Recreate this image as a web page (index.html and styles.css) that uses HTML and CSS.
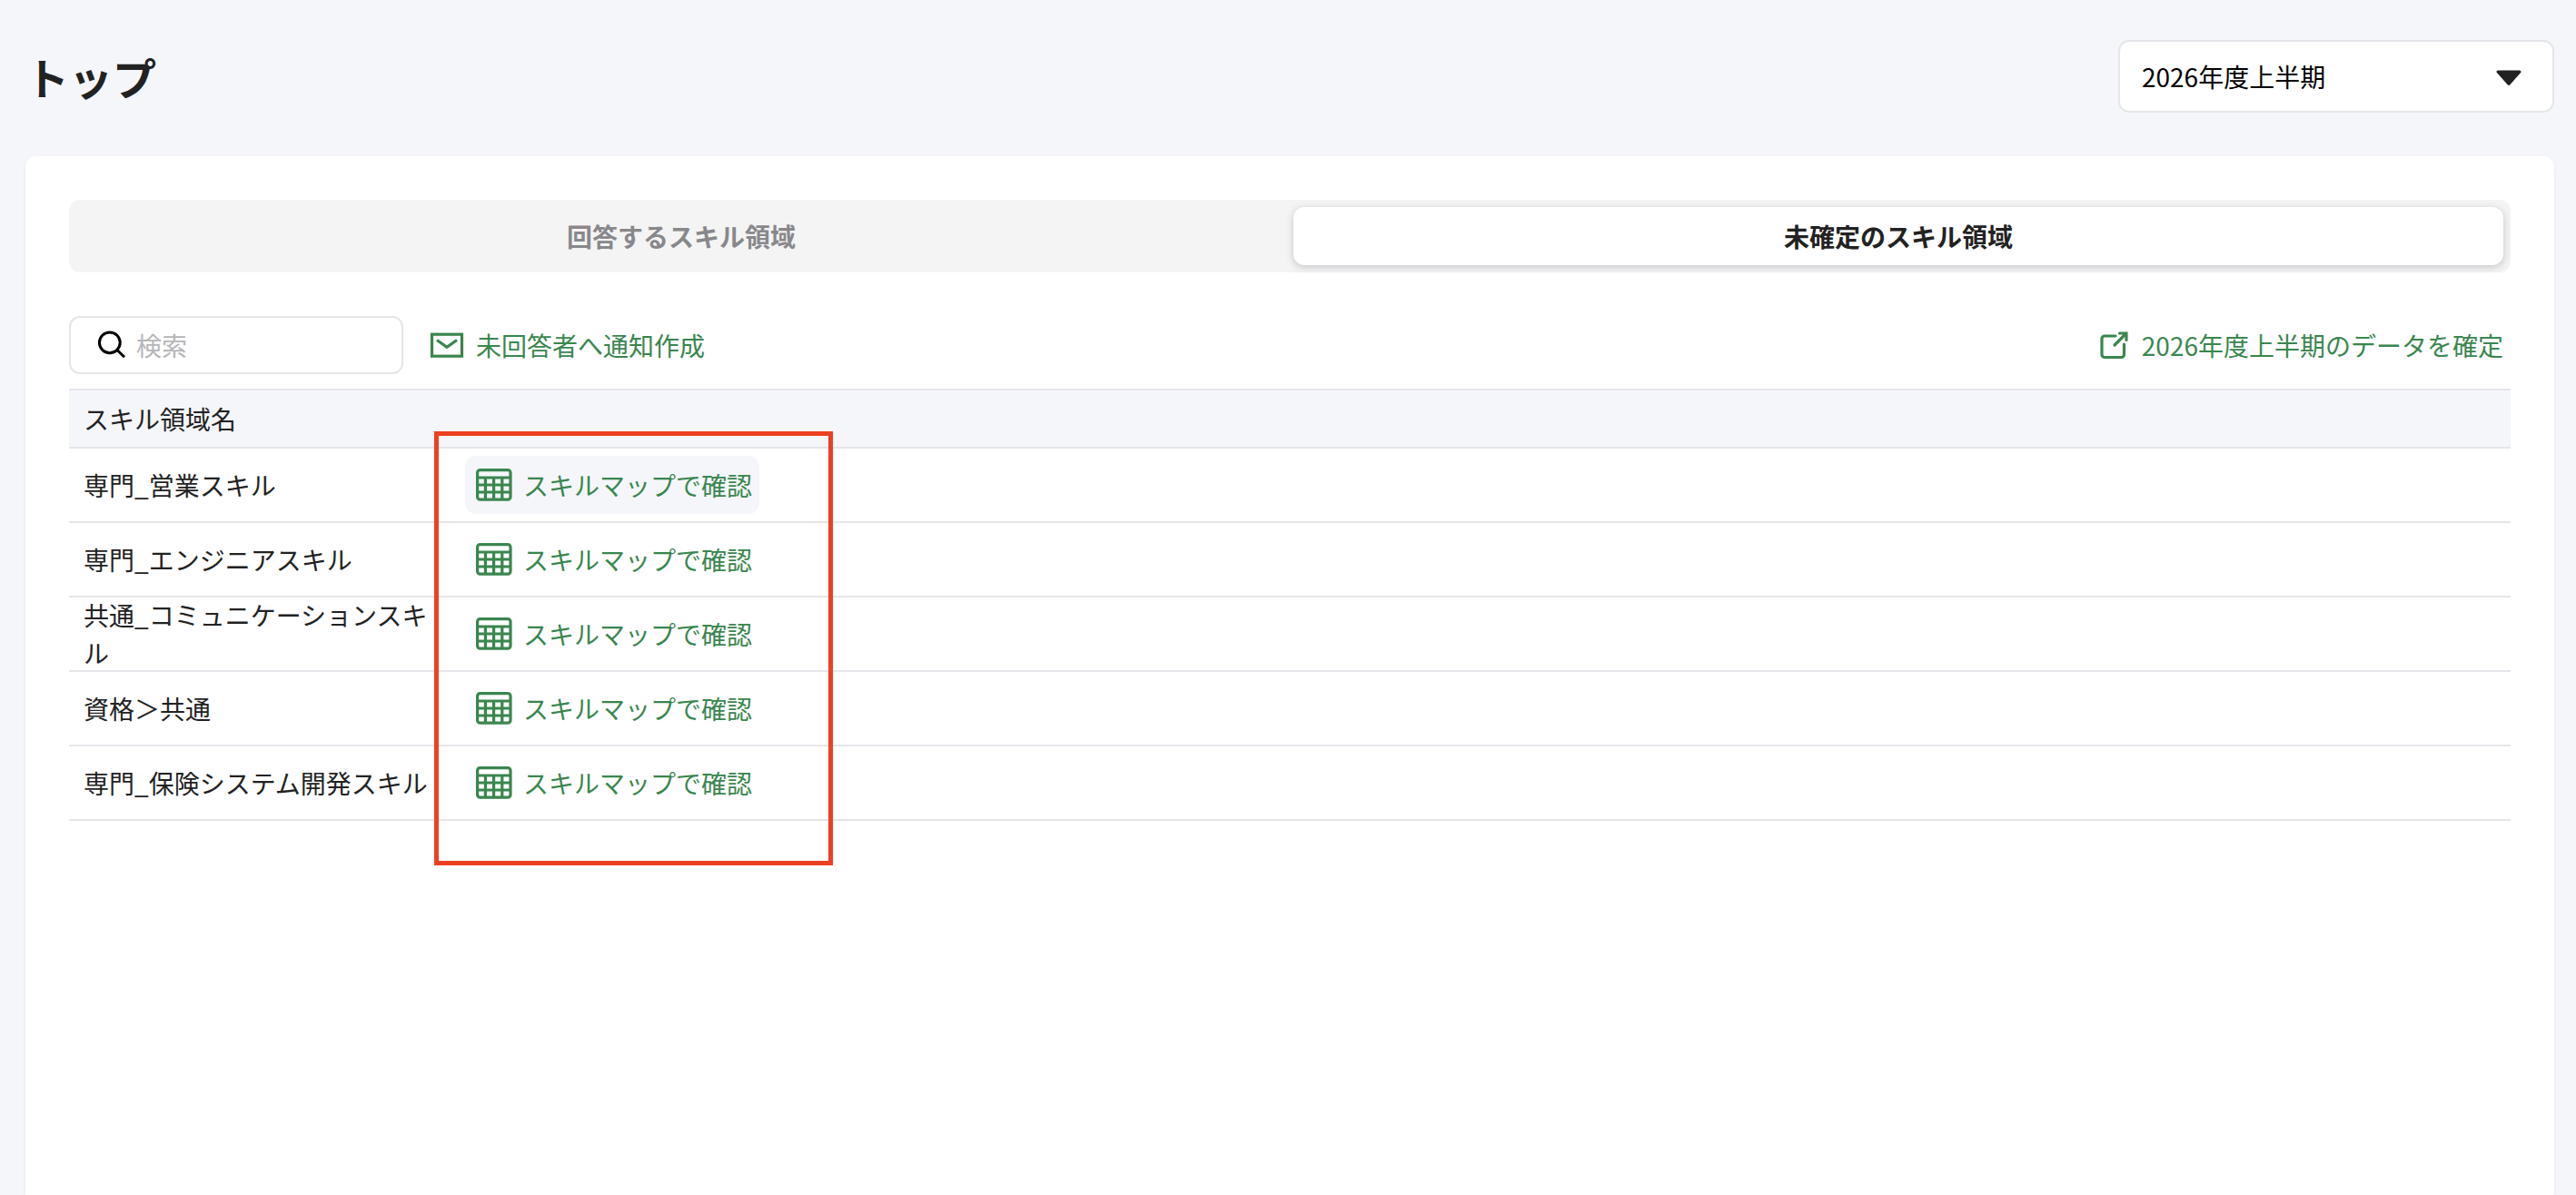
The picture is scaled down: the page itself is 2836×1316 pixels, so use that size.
FILE: index.html
```html
<!DOCTYPE html>
<html lang="ja">
<head>
    <meta charset="UTF-8">
    <meta name="viewport" content="width=device-width, initial-scale=1.0">
    <title>トップ</title>
    <link rel="stylesheet" href="styles.css">
</head>
<body>
    <!-- Shared icons -->
    <svg class="icon-defs" width="0" height="0">
        <symbol id="icon-grid" viewBox="0 0 40 36">
            <rect x="1.6" y="1.6" width="36.4" height="32.6" rx="3"/>
            <path d="M1.600 10H38M1.600 18H38M1.600 26H38M10.400 10V34M19.600 10V34M28.800 10V34"/>
        </symbol>
    </svg>

    <header class="page-header">
        <h1 class="page-title">トップ</h1>
        <div class="term-select">
            <span>2026年度上半期</span>
            <svg class="term-arrow" width="28" height="18" viewBox="0 0 28 18">
                <path d="M2 2H26L14 15.5Z"/>
            </svg>
        </div>
    </header>

    <main class="card">
        <div class="tabs">
            <div class="tab">回答するスキル領域</div>
            <div class="tab active">未確定のスキル領域</div>
        </div>

        <div class="toolbar">
            <label class="search-box">
                <svg class="search-icon" width="32" height="32" viewBox="0 0 32 32">
                    <circle cx="13.8" cy="13.3" r="11.4"/>
                    <path d="M21.5 21L30 29.3"/>
                </svg>
                <input class="search-input" type="text" placeholder="検索">
            </label>
            <a class="link-btn">
                <svg class="icon" width="40" height="32" viewBox="0 0 40 32">
                    <rect x="3.5" y="4.2" width="33" height="24"/>
                    <path d="M9 10.5L20 18.3L31 10.5"/>
                </svg>
                <span>未回答者へ通知作成</span>
            </a>
            <a class="link-btn confirm-btn">
                <svg class="icon icon-open" width="40" height="32" viewBox="0 0 40 32">
                    <path d="M23 6H11A3 3 0 0 0 8 9V26.500A3 3 0 0 0 11 29.500H29.500A3 3 0 0 0 32.500 26.500V15"/>
                    <path d="M22 16L35 3M27.500 3H35V10.500"/>
                </svg>
                <span>2026年度上半期のデータを確定</span>
            </a>
        </div>

        <div class="skill-table">
            <div class="skill-head">スキル領域名</div>
            <div class="skill-row">
                <div class="skill-name">専門_営業スキル</div>
                <a class="link-btn hover"><svg class="icon" width="40" height="36"><use href="#icon-grid"/></svg><span>スキルマップで確認</span></a>
            </div>
            <div class="skill-row">
                <div class="skill-name">専門_エンジニアスキル</div>
                <a class="link-btn"><svg class="icon" width="40" height="36"><use href="#icon-grid"/></svg><span>スキルマップで確認</span></a>
            </div>
            <div class="skill-row">
                <div class="skill-name">共通_コミュニケーションスキル</div>
                <a class="link-btn"><svg class="icon" width="40" height="36"><use href="#icon-grid"/></svg><span>スキルマップで確認</span></a>
            </div>
            <div class="skill-row">
                <div class="skill-name">資格＞共通</div>
                <a class="link-btn"><svg class="icon" width="40" height="36"><use href="#icon-grid"/></svg><span>スキルマップで確認</span></a>
            </div>
            <div class="skill-row">
                <div class="skill-name">専門_保険システム開発スキル</div>
                <a class="link-btn"><svg class="icon" width="40" height="36"><use href="#icon-grid"/></svg><span>スキルマップで確認</span></a>
            </div>
            <div class="highlight"></div>
        </div>
    </main>
</body>
</html>
```

FILE: styles.css
```css
* {
    margin: 0;
    padding: 0;
    box-sizing: border-box;
}

body {
    display: flex;
    flex-direction: column;
    height: 100vh;
    padding: 44px 24px 0 28px;
    overflow: hidden;
    background: #f4f6fa;
    color: #222;
    font-family: "Noto Sans CJK JP", sans-serif;
    font-size: 28px;
    line-height: 42px;
}

.icon-defs {
    position: absolute;
}

/* Header */
.page-header {
    display: flex;
    justify-content: space-between;
    align-items: center;
    height: 80px;
    margin-bottom: 48px;
    flex-shrink: 0;
}

.page-title {
    font-size: 48px;
    font-weight: 700;
    line-height: 72px;
}

.term-select {
    display: flex;
    justify-content: space-between;
    align-items: center;
    width: 480px;
    height: 80px;
    padding: 0 34px 0 24px;
    border: 2px solid #e5e6ea;
    border-radius: 12px;
    background: #fff;
    color: #000;
}

.term-arrow {
    margin-top: 4px;
    fill: #222;
    stroke: #222;
    stroke-width: 3;
    stroke-linejoin: round;
}

/* Card */
.card {
    flex: 1;
    padding: 48px;
    border-radius: 12px 12px 0 0;
    background: #fff;
    box-shadow: 0 2px 4px rgba(34, 34, 60, 0.06);
}

.tabs {
    display: flex;
    gap: 8px;
    height: 80px;
    padding: 8px;
    border-radius: 12px;
    background: #f4f4f4;
}

.tab {
    flex: 1;
    border-radius: 12px;
    color: #88888b;
    font-weight: 700;
    line-height: 64px;
    text-align: center;
}

.tab.active {
    background: #fff;
    color: #222;
    box-shadow: 0 2px 8px rgba(34, 34, 51, 0.22);
}

/* Toolbar */
.toolbar {
    display: flex;
    align-items: center;
    gap: 16px;
    margin: 48px 0 16px;
}

.search-box {
    display: flex;
    align-items: center;
    gap: 11px;
    width: 368px;
    height: 64px;
    padding: 0 24px 0 29px;
    border: 2px solid #e5e6ea;
    border-radius: 12px;
}

.search-icon {
    flex-shrink: 0;
    fill: none;
    stroke: #000;
    stroke-width: 3;
}

.search-input {
    width: 100%;
    border: none;
    outline: none;
    background: none;
    font: inherit;
}

.search-input::placeholder {
    color: #b5b5b8;
}

.link-btn {
    display: flex;
    align-items: center;
    gap: 12px;
    height: 64px;
    padding: 0 8px 0 12px;
    border-radius: 12px;
    color: #3a864f;
    white-space: nowrap;
}

.link-btn.hover {
    background: #f4f6fa;
}

.confirm-btn {
    margin-left: auto;
}

.icon {
    fill: none;
    stroke: #3a864f;
    stroke-width: 3.2;
}

.icon-open {
    stroke-linecap: round;
}

/* Skill table */
.skill-table {
    position: relative;
}

.skill-head {
    height: 66px;
    padding: 0 16px;
    border-top: 2px solid #e5e6ea;
    border-bottom: 2px solid #e5e6ea;
    background: #f4f6fa;
    line-height: 62px;
}

.skill-row {
    display: flex;
    align-items: center;
    height: 82px;
    border-bottom: 2px solid #e5e6ea;
}

.skill-name {
    width: 436px;
    padding: 0 36px 0 16px;
}

/* Marker frame over the link column */
.highlight {
    position: absolute;
    top: 47px;
    left: 402px;
    width: 439px;
    height: 478px;
    border: 5px solid #ed4023;
}
```
